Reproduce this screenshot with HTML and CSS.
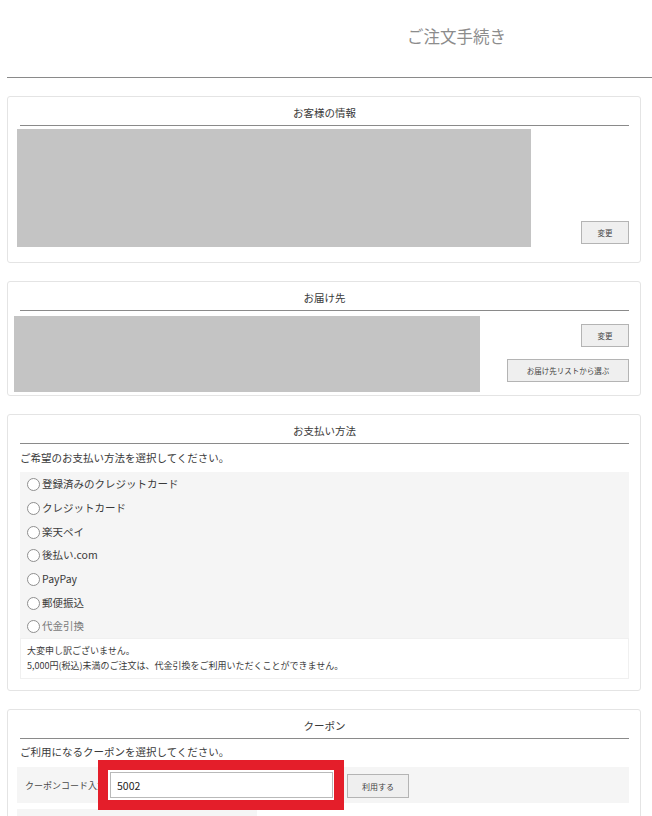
FILE: index.html
```html
<!DOCTYPE html>
<html lang="ja">
<head>
<meta charset="utf-8">
<title>ご注文手続き</title>
<link rel="stylesheet" href="styles.css">
</head>
<body>
<div class="page">
  <header class="header">
    <h1 class="page-title">ご注文手続き</h1>
  </header>
  <hr class="header-rule">

  <section class="box box-customer">
    <h2 class="box-title">お客様の情報</h2>
    <div class="row row-customer">
      <div class="placeholder ph-customer"></div>
      <button class="btn btn-change btn-customer">変更</button>
    </div>
  </section>

  <section class="box box-delivery">
    <h2 class="box-title">お届け先</h2>
    <div class="row row-delivery">
      <div class="placeholder ph-delivery"></div>
      <div class="btn-col">
        <button class="btn btn-change">変更</button>
        <button class="btn btn-list">お届け先リストから選ぶ</button>
      </div>
    </div>
  </section>

  <section class="box box-payment">
    <h2 class="box-title">お支払い方法</h2>
    <p class="lead">ご希望のお支払い方法を選択してください。</p>
    <ul class="options">
      <li class="option"><span class="radio"></span>登録済みのクレジットカード</li>
      <li class="option"><span class="radio"></span>クレジットカード</li>
      <li class="option"><span class="radio"></span>楽天ペイ</li>
      <li class="option"><span class="radio"></span>後払い.com</li>
      <li class="option"><span class="radio"></span>PayPay</li>
      <li class="option"><span class="radio"></span>郵便振込</li>
      <li class="option option-disabled"><span class="radio"></span>代金引換</li>
    </ul>
    <div class="notice">
      <p>大変申し訳ございません。</p>
      <p>5,000円(税込)未満のご注文は、代金引換をご利用いただくことができません。</p>
    </div>
  </section>

  <section class="box box-coupon">
    <h2 class="box-title">クーポン</h2>
    <p class="lead lead-coupon">ご利用になるクーポンを選択してください。</p>
    <div class="coupon-row">
      <span class="coupon-label">クーポンコード入力</span>
      <div class="coupon-input-wrap">
        <span class="highlight"></span>
        <input class="coupon-input" type="text" value="5002">
      </div>
      <button class="btn btn-use">利用する</button>
    </div>
    <div class="coupon-next"></div>
  </section>
</div>
</body>
</html>
```

FILE: styles.css
```css
* { box-sizing: border-box; }

html, body {
  margin: 0;
  padding: 0;
  background: #ffffff;
}

body {
  font-family: "Noto Sans CJK JP", "Noto Sans", sans-serif;
  color: #3a3a3a;
  overflow: hidden;
}

.page {
  padding-left: 7px;
  height: 816px;
  overflow: hidden;
}

.header {
  height: 77px;
  display: flex;
  align-items: flex-start;
}

.page-title {
  margin: 25px 0 0 400px;
  font-size: 16.5px;
  font-weight: 400;
  line-height: 22px;
  color: #8c8c8c;
}

.header-rule {
  margin: 0;
  border: 0;
  height: 1px;
  background: #8a8a8a;
}

.box {
  width: 634px;
  margin-top: 18px;
  border: 1px solid #e4e4e4;
  border-radius: 3px;
  padding: 0 11px 0 12px;
}

.box-customer { margin-top: 18px; padding-bottom: 15px; }
.box-delivery { padding-bottom: 3px; }
.box-payment { padding-bottom: 11px; }

.box-title {
  margin: 0;
  padding: 8px 0 4px;
  font-size: 10.5px;
  line-height: 16px;
  font-weight: 400;
  text-align: center;
  color: #3a3a3a;
  border-bottom: 1px solid #8a8a8a;
}

.row {
  display: flex;
}

.row-customer {
  margin-top: 3px;
  margin-left: -3px;
  align-items: flex-end;
  justify-content: space-between;
}

.row-delivery {
  margin-top: 5px;
  margin-left: -6px;
  justify-content: space-between;
}

.placeholder {
  background: #c4c4c4;
}

.ph-customer {
  width: 514px;
  height: 118px;
}

.ph-delivery {
  width: 466px;
  height: 76px;
}

.btn {
  font-family: "Noto Sans CJK JP", sans-serif;
  font-size: 7.5px;
  color: #444444;
  background: #efefef;
  border: 1px solid #b4b4b4;
  border-radius: 0;
  padding: 0;
  height: 23px;
  line-height: 21px;
  cursor: pointer;
}

.btn-change {
  width: 48px;
}

.btn-customer {
  margin-bottom: 3px;
}

.btn-col {
  display: flex;
  flex-direction: column;
  align-items: flex-end;
  gap: 12px;
  padding-top: 8px;
}

.btn-list {
  width: 122px;
}

.lead {
  margin: 5px 0 0;
  font-size: 10.5px;
  line-height: 18px;
  color: #3a3a3a;
}

.options {
  list-style: none;
  margin: 5px 0 0;
  padding: 0;
  background: #f5f5f5;
}

.option {
  height: 23.7px;
  display: flex;
  align-items: center;
  padding-left: 7px;
  font-size: 10.5px;
  color: #3a3a3a;
}

.option-disabled {
  color: #7a7a7a;
}

.radio {
  width: 13px;
  height: 13px;
  border: 1px solid #8f8f8f;
  border-radius: 50%;
  background: #ffffff;
  margin-right: 2px;
  margin-top: 2px;
  flex: none;
}

.notice {
  border: 1px solid #f0f0f0;
  padding: 4px 6px 5px;
  font-size: 9px;
  line-height: 15px;
  color: #3a3a3a;
}

.notice p {
  margin: 0;
}

.lead-coupon {
  margin-top: 4px;
}

.coupon-row {
  margin-top: 6px;
  margin-left: -3px;
  height: 36px;
  background: #f5f5f5;
  display: flex;
  align-items: center;
  padding-left: 8px;
}

.coupon-label {
  width: 85px;
  flex: none;
  font-size: 9px;
  color: #4a4a4a;
  white-space: nowrap;
  overflow: hidden;
  margin-top: 2px;
}

.coupon-input-wrap {
  position: relative;
  width: 223px;
  height: 26px;
  flex: none;
  margin-top: -2px;
}

.highlight {
  position: absolute;
  left: -12px;
  top: -11px;
  width: 246px;
  height: 50px;
  border: 10px solid #e41e2a;
  background: #ffffff;
}

.coupon-input {
  position: relative;
  width: 223px;
  height: 26px;
  border: 1px solid #b9b9b9;
  padding: 0 6px;
  font-family: "Noto Sans CJK JP", sans-serif;
  font-size: 10.5px;
  color: #222222;
  background: #ffffff;
  outline: none;
}

.btn-use {
  width: 62px;
  height: 24px;
  margin-left: 14px;
  font-size: 8px;
  margin-top: 3px;
}

.coupon-next {
  margin-top: 6px;
  margin-left: -3px;
  width: 240px;
  height: 20px;
  background: #f5f5f5;
}
```
